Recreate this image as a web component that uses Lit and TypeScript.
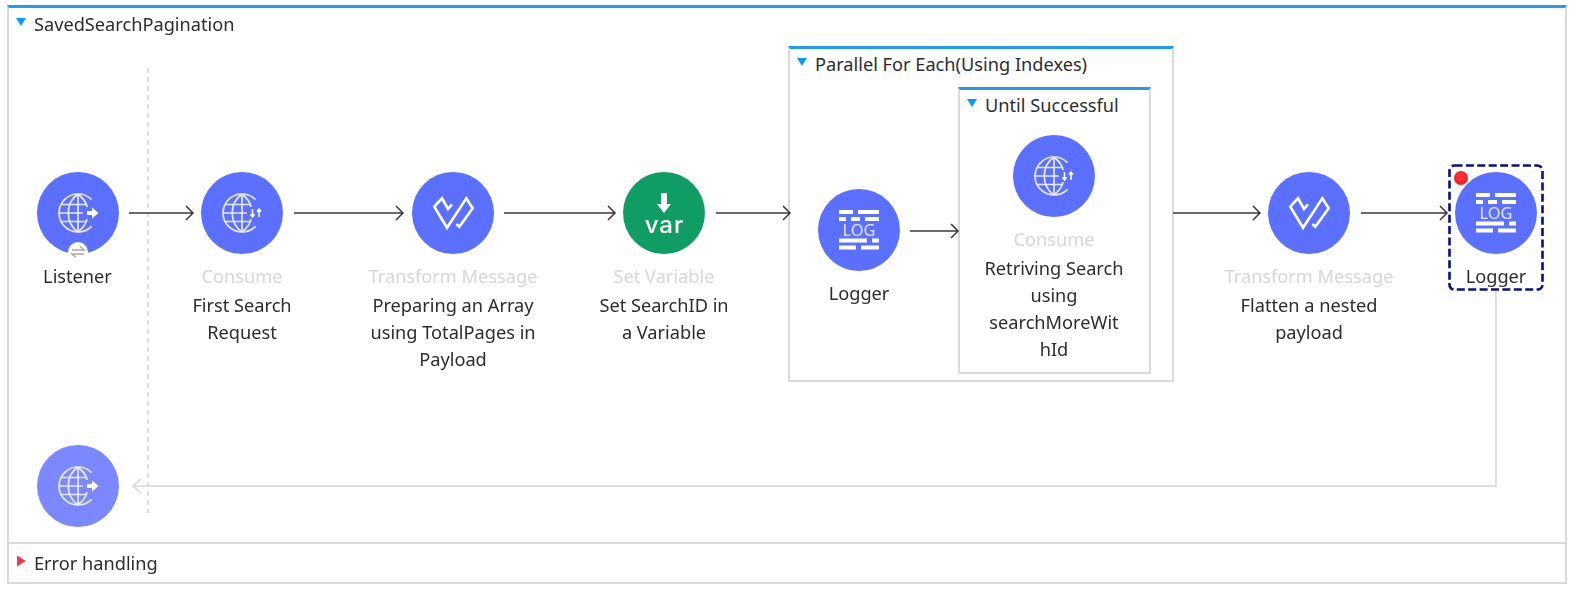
import { LitElement, html, css, svg } from "lit";
import { customElement, property } from "lit/decorators.js";

// page coordinates of the canvas origin, diagram data below is in page px
const OX = 9;
const OY = 40;

const INDIGO = "#5c70ff";
const GREEN = "#0f9d63";

const globeBase = svg`
  <g fill="none" stroke="#e8eaff" stroke-width="1.7">
    <path d="M13.5 -13.4A19 19 0 1 0 13.5 13.4" />
    <path d="M0 -19V19M-16.5 -8.5H8M-16.5 8.5H8M-19 0H5" />
    <path d="M0 -19C-13 -10 -13 10 0 19M0 -19C6 -14 8.5 -10 9 -6M0 19C6 14 8.5 10 9 6" />
  </g>`;

const icons: Record<string, unknown> = {
  listener: svg`${globeBase}
    <path d="M9 -2H14V-5.5L20.5 0L14 5.5V2H9Z" fill="#fff" />`,
  consume: svg`${globeBase}
    <path d="M10.5 -4V3.5M8.5 1.2L10.5 4L12.5 1.2M17 4V-3.5M15 -1.2L17 -4L19 -1.2" fill="none" stroke="#fff" stroke-width="1.5" />`,
  transform: svg`
    <path d="M-1 -8.7L-5 -4L-11 -14.7L-18.7 -6.3L-6 14.7L13.3 -14.7L19.7 -4.7L6.3 13.7L3.3 11"
      fill="none" stroke="#fff" stroke-width="2.6" stroke-linejoin="miter" />`,
  variable: svg`
    <path d="M-3 -20H3V-9H7L0 0L-7 -9H-3Z" fill="#fff" />
    <text x="0.5" y="20" text-anchor="middle" class="var">var</text>`,
  logger: svg`
    <g fill="#fff">
      <rect x="-20" y="-20" width="14" height="4" />
      <rect x="-1" y="-20" width="21" height="4" />
      <rect x="-20" y="-13" width="7" height="4" />
      <rect x="-8" y="-13" width="9" height="4" />
      <rect x="6" y="-13" width="14" height="4" />
      <rect x="-20" y="8.5" width="28" height="4" />
      <rect x="13" y="8.5" width="7" height="4" />
      <rect x="-20" y="15.5" width="17" height="4" />
      <rect x="2" y="15.5" width="18" height="4" />
    </g>
    <text x="0" y="5.7" text-anchor="middle" class="log">LOG</text>`,
};

@customElement("flow-node")
class FlowNode extends LitElement {
  @property() icon = "logger";
  @property() type = "";
  @property({ type: Array }) lines: string[] = [];
  @property() color = INDIGO;
  @property({ type: Boolean }) badge = false;

  static styles = css`
    :host {
      display: flex;
      flex-direction: column;
      align-items: center;
      width: 200px;
      font: 18.2px/27px "Noto Sans", sans-serif;
      color: #2c2c30;
    }
    .disc {
      position: relative;
      width: 82px;
      height: 82px;
      border-radius: 50%;
      margin-bottom: 9px;
    }
    svg {
      display: block;
    }
    .type {
      color: #d6d6da;
    }
    .name {
      margin-top: 2px;
      text-align: center;
      white-space: nowrap;
    }
    .var {
      font: 500 24px Inter, sans-serif;
      letter-spacing: 1px;
      fill: #fff;
    }
    .log {
      font: 400 16.4px "Noto Sans", sans-serif;
      fill: #e4e6ff;
    }
    .badge {
      position: absolute;
      left: 31px;
      top: 70px;
      width: 20px;
      height: 20px;
      border-radius: 50%;
      background: #fff;
    }
  `;

  render() {
    return html`
      <div class="disc" style="background:${this.color}">
        <svg width="82" height="82" viewBox="-41 -41 82 82">${icons[this.icon]}</svg>
        ${this.badge
          ? html`<div class="badge">
              <svg width="20" height="20" viewBox="0 0 20 20" fill="none" stroke="#a8a8ac" stroke-width="1.5">
                <path d="M4 8H16L12 4.5M16 12H4L8 15.5" />
              </svg>
            </div>`
          : ""}
      </div>
      ${this.type ? html`<div class="type">${this.type}</div>` : ""}
      ${this.lines.length
        ? html`<div class=${this.type ? "name" : ""}>${this.lines.map((l) => html`<div>${l}</div>`)}</div>`
        : ""}
    `;
  }
}

const nodes = [
  { x: 77.5, y: 213, icon: "listener", lines: ["Listener"], badge: true },
  { x: 242, y: 213, icon: "consume", type: "Consume", lines: ["First Search", "Request"] },
  { x: 453, y: 213, icon: "transform", type: "Transform Message", lines: ["Preparing an Array", "using TotalPages in", "Payload"] },
  { x: 664, y: 213, icon: "variable", type: "Set Variable", lines: ["Set SearchID in", "a Variable"], color: GREEN },
  { x: 859, y: 230, icon: "logger", lines: ["Logger"] },
  { x: 1054, y: 176, icon: "consume", type: "Consume", lines: ["Retriving Search", "using", "searchMoreWit", "hId"] },
  { x: 1309, y: 213, icon: "transform", type: "Transform Message", lines: ["Flatten a nested", "payload"] },
  { x: 1496, y: 213, icon: "logger", lines: ["Logger"] },
  { x: 77.5, y: 486, icon: "listener", lines: [], color: "#7b88ff" },
];

// straight black connectors: x1, x2, y
const arrows = [
  [129, 193, 213],
  [294, 403, 213],
  [504, 615, 213],
  [716, 790, 213],
  [910, 958, 231],
  [1173, 1260, 213],
  [1361, 1447, 213],
];

const scopes = [
  { x: 788, y: 46, w: 386, h: 336, title: "Parallel For Each(Using Indexes)" },
  { x: 958, y: 87, w: 193, h: 287, title: "Until Successful" },
];

@customElement("app-root")
export class AppRoot extends LitElement {
  static styles = css`
    :host {
      display: block;
      width: 1580px;
      height: 612px;
      padding: 5px 13px 0 7px;
      box-sizing: border-box;
      background: #fff;
      overflow: hidden;
      font: 18.2px/27px "Noto Sans", sans-serif;
      color: #2c2c30;
    }
    .flow {
      display: flex;
      flex-direction: column;
      height: 579px;
      box-sizing: border-box;
      border: 2px solid #dadade;
      border-top: 3px solid #1f9bf5;
      filter: blur(0.3px);
    }
    .head {
      display: flex;
      align-items: center;
      gap: 8px;
      height: 32px;
      padding-left: 7px;
      flex: none;
    }
    .canvas {
      position: relative;
      flex: 1;
    }
    .error {
      display: flex;
      align-items: center;
      gap: 8px;
      height: 38px;
      padding-left: 8px;
      flex: none;
      border-top: 2px solid #dadade;
    }
    .tri {
      width: 10px;
      height: 8px;
      flex: none;
      margin-top: -4px;
      background: #0a98ff;
      clip-path: polygon(0 0, 100% 0, 50% 100%);
    }
    .tri.closed {
      width: 9px;
      height: 11px;
      background: #e4404f;
      clip-path: polygon(0 0, 100% 50%, 0 100%);
    }
    .scope {
      position: absolute;
      box-sizing: border-box;
      border: 2px solid #dadade;
      border-top: 3px solid #1f9bf5;
      background: #fff;
    }
    .scope .head {
      height: 30px;
    }
    .wires {
      position: absolute;
      left: 0;
      top: 0;
    }
    flow-node {
      position: absolute;
    }
    .dot {
      position: absolute;
      width: 14px;
      height: 14px;
      border-radius: 50%;
      background: radial-gradient(circle at 50% 40%, #ff3a3a, #f00c1e);
    }
  `;

  render() {
    return html`
      <div class="flow">
        <div class="head"><span class="tri"></span><span>SavedSearchPagination</span></div>
        <div class="canvas">
          ${scopes.map(
            (s) => html`<div
              class="scope"
              style="left:${s.x - OX}px;top:${s.y - OY}px;width:${s.w}px;height:${s.h}px"
            >
              <div class="head"><span class="tri"></span><span>${s.title}</span></div>
            </div>`
          )}
          <svg class="wires" width="1560" height="502" viewBox="${OX} ${OY} 1560 502" fill="none">
            <path d="M148 68V513" stroke="#c8c8ce" stroke-width="1.2" stroke-dasharray="5 4" />
            <path d="M1496 290V486H133M141 479L133 486L141 493" stroke="#d8d8dc" stroke-width="1.6" />
            ${arrows.map(
              ([a, b, y]) => svg`<path d="M${a} ${y}H${b}M${b - 7} ${y - 7}L${b} ${y}L${b - 7} ${y + 7}"
                stroke="#3a3a3e" stroke-width="1.5" />`
            )}
            <rect x="1449.5" y="165.5" width="93" height="124" rx="5" stroke="#060f85" stroke-width="2.6" stroke-dasharray="8 3.4" />
          </svg>
          ${nodes.map(
            (n) => html`<flow-node
              style="left:${n.x - OX - 100}px;top:${n.y - OY - 41}px"
              .icon=${n.icon}
              .type=${n.type ?? ""}
              .lines=${n.lines}
              .color=${n.color ?? INDIGO}
              .badge=${!!n.badge}
            ></flow-node>`
          )}
          <div class="dot" style="left:${1454 - OX}px;top:${171 - OY}px"></div>
        </div>
        <div class="error"><span class="tri closed"></span><span>Error handling</span></div>
      </div>
    `;
  }
}
